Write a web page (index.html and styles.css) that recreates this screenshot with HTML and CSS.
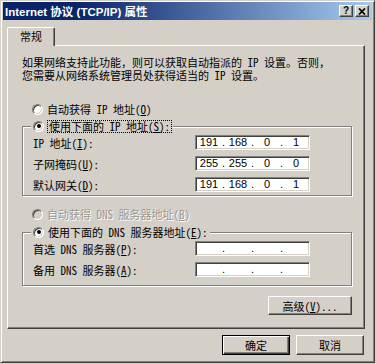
FILE: index.html
```html
<!DOCTYPE html>
<html lang="zh-CN">
<head>
    <meta charset="UTF-8" />
    <meta name="viewport" content="width=device-width, initial-scale=1.0"/>
    <title>Internet 协议 (TCP/IP) 属性</title>
    <link rel="stylesheet" href="styles.css">
</head>
<body>
    <div class="window">
        <div class="title-bar">
            <span class="title">Internet 协议 (TCP/IP) 属性</span>
            <div class="title-buttons">
                <button class="title-btn help">?</button>
                <button class="title-btn close">
                    <svg width="8" height="7" viewBox="0 0 8 7">
                        <path d="M1 0.5 L7 6.5 M7 0.5 L1 6.5" stroke="#000" stroke-width="1.7" fill="none"/>
                    </svg>
                </button>
            </div>
        </div>

        <div class="dialog-body">
            <div class="tabs">
                <div class="tab active">常规</div>
            </div>

            <div class="tab-panel">
                <p class="desc">如果网络支持此功能，则可以获取自动指派的 IP 设置。否则，<br>您需要从网络系统管理员处获得适当的 IP 设置。</p>

                <div class="option first">
                    <span class="radio"></span>
                    <span>自动获得 IP 地址(<u>O</u>)</span>
                </div>

                <!-- feste IP-Adresse -->
                <fieldset class="group ip-group">
                    <legend class="option">
                        <span class="radio checked"></span>
                        <span class="focus">使用下面的 IP 地址(<u>S</u>):</span>
                    </legend>
                    <div class="field-row">
                        <label>IP 地址(<u>I</u>):</label>
                        <div class="ip-box">
                            <span class="seg">191</span><span class="dot">.</span><span class="seg">168</span><span class="dot">.</span><span class="seg">0</span><span class="dot">.</span><span class="seg">1</span>
                        </div>
                    </div>
                    <div class="field-row">
                        <label>子网掩码(<u>U</u>):</label>
                        <div class="ip-box">
                            <span class="seg">255</span><span class="dot">.</span><span class="seg">255</span><span class="dot">.</span><span class="seg">0</span><span class="dot">.</span><span class="seg">0</span>
                        </div>
                    </div>
                    <div class="field-row">
                        <label>默认网关(<u>D</u>):</label>
                        <div class="ip-box">
                            <span class="seg">191</span><span class="dot">.</span><span class="seg">168</span><span class="dot">.</span><span class="seg">0</span><span class="dot">.</span><span class="seg">1</span>
                        </div>
                    </div>
                </fieldset>

                <div class="option disabled dns-auto">
                    <span class="radio"></span>
                    <span>自动获得 DNS 服务器地址(<u>B</u>)</span>
                </div>

                <!-- DNS -->
                <fieldset class="group dns-group">
                    <legend class="option">
                        <span class="radio checked"></span>
                        <span>使用下面的 DNS 服务器地址(<u>E</u>):</span>
                    </legend>
                    <div class="field-row">
                        <label>首选 DNS 服务器(<u>P</u>):</label>
                        <div class="ip-box">
                            <span class="seg"></span><span class="dot">.</span><span class="seg"></span><span class="dot">.</span><span class="seg"></span><span class="dot">.</span><span class="seg"></span>
                        </div>
                    </div>
                    <div class="field-row">
                        <label>备用 DNS 服务器(<u>A</u>):</label>
                        <div class="ip-box">
                            <span class="seg"></span><span class="dot">.</span><span class="seg"></span><span class="dot">.</span><span class="seg"></span><span class="dot">.</span><span class="seg"></span>
                        </div>
                    </div>
                </fieldset>

                <div class="advanced-row">
                    <button class="btn advanced">高级(<u>V</u>)...</button>
                </div>
            </div>

            <div class="dialog-buttons">
                <button class="btn default">确定</button>
                <button class="btn">取消</button>
            </div>
        </div>
    </div>
</body>
</html>
```

FILE: styles.css
```css
:root {
    --face: #d4d0c8;
    --light: #ffffff;
    --shadow: #808080;
    --dark: #404040;
    --title-start: #0a246a;
    --title-end: #a6caf0;
}

body {
    margin: 0;
    background: var(--face);
    font-family: "Noto Sans Mono CJK SC", "Noto Sans CJK SC", sans-serif;
    font-size: 11px;
    color: #000;
}

.window {
    width: 375px;
    height: 363px;
    box-sizing: border-box;
    border: 1px solid;
    border-color: var(--face) var(--dark) var(--dark) var(--face);
    box-shadow: inset 1px 1px 0 var(--light), inset -1px -1px 0 var(--shadow);
    padding: 1px 2px 2px 2px;
    display: flex;
    flex-direction: column;
}

/* Titelleiste */
.title-bar {
    height: 18px;
    display: flex;
    align-items: center;
    justify-content: space-between;
    padding: 0 3px 0 2px;
    background: linear-gradient(to right, var(--title-start) 20%, var(--title-end));
}

.title {
    color: #fff;
    font-family: "Liberation Sans", "Noto Sans CJK SC", sans-serif;
    font-weight: bold;
    font-size: 11.5px;
    white-space: nowrap;
}

.title-buttons {
    display: flex;
    gap: 2px;
}

.title-btn {
    width: 14px;
    height: 12px;
    padding: 0;
    margin: 0;
    background: var(--face);
    border: 1px solid;
    border-color: var(--light) var(--dark) var(--dark) var(--light);
    box-shadow: inset -1px -1px 0 var(--shadow);
    display: flex;
    align-items: center;
    justify-content: center;
    font-family: "Liberation Sans", sans-serif;
    font-weight: bold;
    font-size: 10px;
    line-height: 1;
    color: #000;
}

/* Dialoginhalt */
.dialog-body {
    flex: 1;
    padding: 7px 7px 0 4px;
    display: flex;
    flex-direction: column;
}

.tabs {
    display: flex;
    height: 18px;
}

.tab {
    width: 48px;
    box-sizing: border-box;
    background: var(--face);
    border: 1px solid;
    border-color: var(--light) var(--dark) transparent var(--light);
    box-shadow: inset -1px 0 0 var(--shadow);
    border-bottom: none;
    border-radius: 2px 2px 0 0;
    text-align: center;
    line-height: 16px;
    position: relative;
    z-index: 1;
    margin-bottom: -1px;
    height: 19px;
}

.tab-panel {
    height: 284px;
    box-sizing: border-box;
    border: 1px solid;
    border-color: var(--light) var(--dark) var(--dark) var(--light);
    box-shadow: inset -1px -1px 0 var(--shadow);
    padding: 10px 12px 0 14px;
}

.desc {
    margin: 0;
    line-height: 13px;
    white-space: nowrap;
}

u {
    text-decoration: underline;
    text-underline-offset: 1px;
}

/* Radiobuttons */
.option {
    display: flex;
    align-items: center;
    height: 14px;
    line-height: 14px;
    padding-left: 10px;
    white-space: nowrap;
}

.option.first {
    margin-top: 20px;
}

.radio {
    width: 11px;
    height: 11px;
    box-sizing: border-box;
    border-radius: 50%;
    border: 1px solid;
    border-color: var(--shadow) var(--light) var(--light) var(--shadow);
    box-shadow: inset 1px 1px 0 var(--dark), inset -1px -1px 0 var(--face);
    background: #fff;
    margin-right: 4px;
    display: flex;
    align-items: center;
    justify-content: center;
    flex-shrink: 0;
}

.radio.checked::after {
    content: "";
    width: 4px;
    height: 4px;
    border-radius: 50%;
    background: #000;
}

.option.disabled {
    color: #9a978f;
    text-shadow: 1px 1px 0 #fff;
}

.option.disabled .radio {
    background: var(--face);
}

.focus {
    outline: 1px dotted #000;
    outline-offset: 0;
    padding: 0 1px;
    line-height: 11px;
}

/* Gruppenrahmen */
.group {
    width: 330px;
    box-sizing: border-box;
    margin: 0;
    padding: 2px 10px 3px 10px;
    border: 1px solid var(--shadow);
    box-shadow: 1px 1px 0 var(--light), inset 1px 1px 0 var(--light);
}

.group legend {
    padding: 0 2px;
    margin-left: -2px;
    background: var(--face);
}

.ip-group {
    margin-top: 3px;
}

.dns-auto {
    margin-top: 11px;
}

.dns-group {
    margin-top: 4px;
    padding-bottom: 8px;
}

.field-row {
    display: flex;
    align-items: center;
    height: 15px;
    margin-top: 6px;
}

.field-row:first-of-type {
    margin-top: 0;
}

.field-row label {
    width: 162px;
    white-space: nowrap;
}

/* IP-Eingabefeld */
.ip-box {
    width: 115px;
    height: 15px;
    box-sizing: border-box;
    background: #fff;
    border: 1px solid;
    border-color: var(--shadow) var(--light) var(--light) var(--shadow);
    box-shadow: inset 1px 1px 0 var(--dark), inset -1px -1px 0 var(--face);
    display: flex;
    font-family: "Liberation Sans", sans-serif;
    font-size: 11px;
    line-height: 13px;
}

.seg {
    width: 26px;
    text-align: center;
}

.dot {
    width: 3px;
    text-align: center;
}

/* Schaltflächen */
.btn {
    height: 20px;
    padding: 0;
    background: var(--face);
    border: 1px solid;
    border-color: var(--light) var(--dark) var(--dark) var(--light);
    box-shadow: inset -1px -1px 0 var(--shadow);
    font-family: "Noto Sans Mono CJK SC", "Noto Sans CJK SC", sans-serif;
    font-size: 11px;
    color: #000;
}

.btn.default {
    border: 1px solid #000;
    box-shadow: inset 1px 1px 0 var(--light), inset -1px -1px 0 var(--dark), inset -2px -2px 0 var(--shadow);
}

.advanced-row {
    display: flex;
    justify-content: flex-end;
    margin-top: 10px;
}

.btn.advanced {
    width: 84px;
    height: 19px;
}

.dialog-buttons {
    display: flex;
    justify-content: flex-end;
    gap: 6px;
    margin-top: 6px;
    padding-right: 1px;
}

.dialog-buttons .btn {
    width: 68px;
}
```
